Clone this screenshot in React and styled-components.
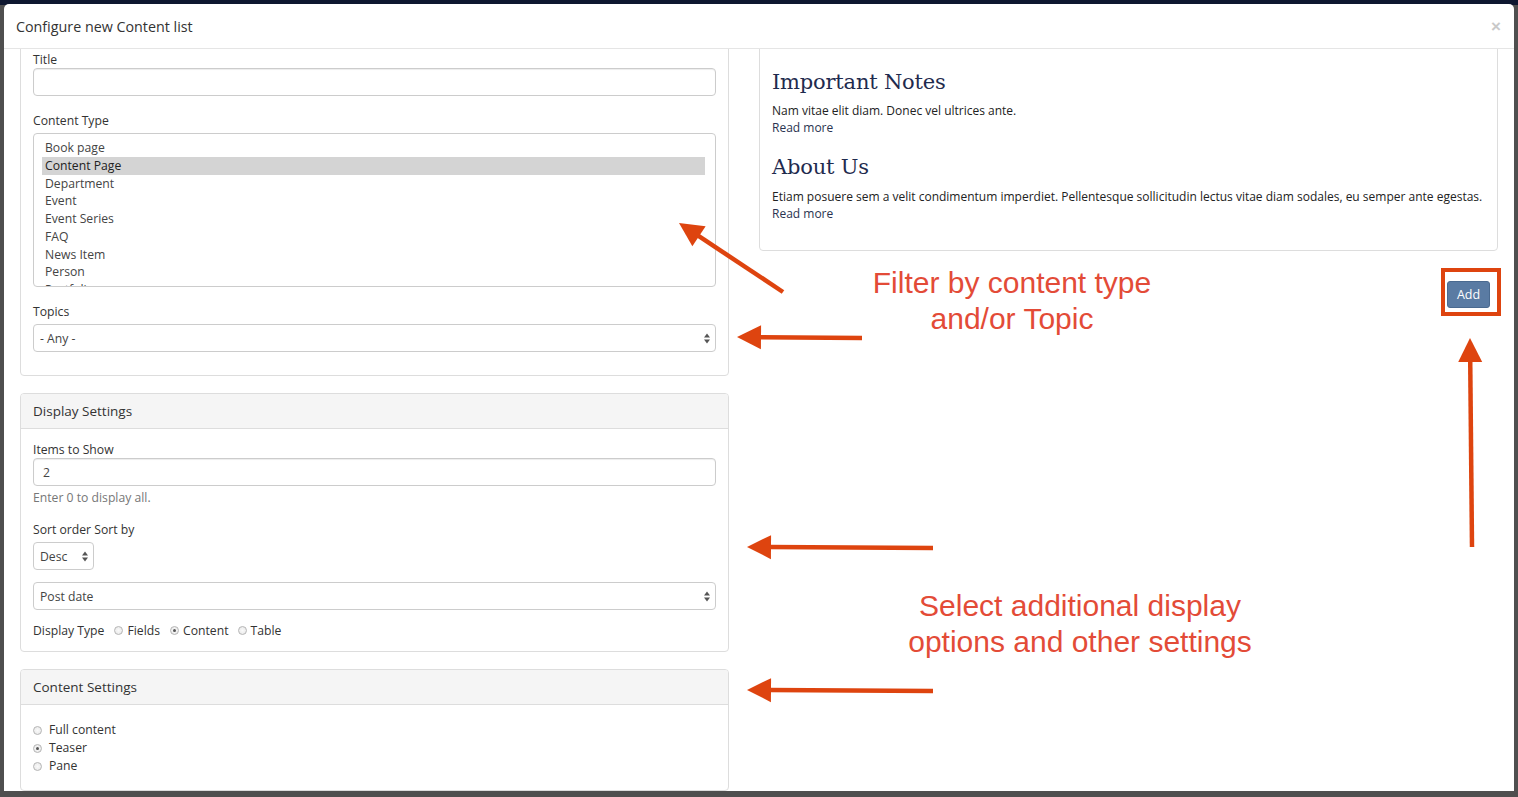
import styled, { createGlobalStyle } from "styled-components";

const GlobalStyle = createGlobalStyle`
  html, body {
    margin: 0;
    padding: 0;
  }
  body {
    font-family: "Open Sans", "Liberation Sans", sans-serif;
    color: #333;
  }
`;

const Backdrop = styled.div`
  position: relative;
  width: 1518px;
  height: 797px;
  box-sizing: border-box;
  padding: 4px 4px 6px 4px;
  background: linear-gradient(#0e1730 0 5px, #4f4f4f 5px);
  overflow: hidden;
`;

const Modal = styled.div`
  height: 100%;
  background: #fff;
  border-radius: 5px 5px 0 0;
  display: flex;
  flex-direction: column;
  overflow: hidden;
`;

const Header = styled.div`
  flex: none;
  height: 44px;
  border-bottom: 1px solid #e5e5e5;
  display: flex;
  align-items: center;
  justify-content: space-between;
  padding: 0 13px 0 12px;
`;

const Title = styled.h4`
  margin: 0;
  font-size: 14.3px;
  font-weight: 400;
  color: #333;
`;

const Close = styled.span`
  font-family: "Liberation Sans", sans-serif;
  font-size: 17px;
  font-weight: 700;
  color: #c9c9c9;
  line-height: 1;
`;

const Body = styled.div`
  flex: 1;
  display: flex;
  align-items: flex-start;
  gap: 30px;
  padding: 0 16px;
  overflow: hidden;
`;

const Column = styled.div`
  width: ${(p) => p.$width}px;
  flex: none;
  display: flex;
  flex-direction: column;
`;

const Panel = styled.div`
  border: 1px solid #ddd;
  border-radius: 4px;
  background: #fff;
  margin-top: ${(p) => p.$top || 0}px;
  padding: ${(p) => p.$pad || "0"};
`;

const PanelHeading = styled.div`
  height: 34px;
  display: flex;
  align-items: center;
  padding: 0 12px;
  background: #f5f5f5;
  border-bottom: 1px solid #ddd;
  border-radius: 3px 3px 0 0;
  font-size: 13.5px;
  color: #333;
`;

const PanelBody = styled.div`
  padding: ${(p) => p.$pad};
`;

const Group = styled.div`
  margin-bottom: ${(p) => p.$mb || 0}px;
`;

const Label = styled.label`
  display: block;
  font-size: 12.2px;
  line-height: 17px;
  color: #333;
  margin-bottom: ${(p) => p.$gap || 0}px;
`;

const TextInput = styled.div`
  box-sizing: border-box;
  height: 28px;
  border: 1px solid #ccc;
  border-radius: 4px;
  box-shadow: inset 0 1px 1px rgba(0, 0, 0, 0.075);
  padding: 0 9px;
  display: flex;
  align-items: center;
  font-size: 12.2px;
  color: #444;
`;

const ListBox = styled.div`
  box-sizing: border-box;
  height: 154px;
  border: 1px solid #ccc;
  border-radius: 4px;
  padding: 5px 10px 0 8px;
  overflow: hidden;
`;

const Option = styled.div`
  height: 17.75px;
  line-height: 17.75px;
  padding-left: 3px;
  font-size: 12.2px;
  color: ${(p) => (p.$selected ? "#222" : "#444")};
  background: ${(p) => (p.$selected ? "#d4d4d4" : "transparent")};
`;

const SelectBox = styled.div`
  box-sizing: border-box;
  width: ${(p) => (p.$width ? `${p.$width}px` : "100%")};
  height: 28px;
  border: 1px solid #ccc;
  border-radius: 4px;
  padding: 0 5px 0 6px;
  display: flex;
  align-items: center;
  justify-content: space-between;
  font-size: 12.2px;
  color: #444;
`;

const Help = styled.div`
  margin-top: 4px;
  font-size: 12.2px;
  line-height: 16px;
  color: #777;
`;

const InlineRow = styled.div`
  display: flex;
  align-items: center;
  font-size: 12.2px;
  line-height: 17px;
  color: #333;
`;

const RadioLabel = styled.span`
  display: inline-flex;
  align-items: center;
  gap: ${(p) => p.$gap || 5}px;
  margin-left: ${(p) => p.$ml || 0}px;
`;

const Radio = styled.span`
  box-sizing: border-box;
  width: 9px;
  height: 9px;
  border-radius: 50%;
  border: 1px solid #b5b5b5;
  background: radial-gradient(circle, #fafafa 0, #e6e6e6 100%);
  display: inline-flex;
  align-items: center;
  justify-content: center;
  &::after {
    content: "";
    width: 3px;
    height: 3px;
    border-radius: 50%;
    background: ${(p) => (p.$checked ? "#555" : "transparent")};
  }
`;

const RadioList = styled.div`
  display: flex;
  flex-direction: column;
  font-size: 12.2px;
  line-height: 18px;
  color: #333;
`;

const Heading = styled.h2`
  margin: ${(p) => p.$mt || 0}px 0 0;
  font-family: "DejaVu Serif", "Liberation Serif", serif;
  font-size: 21px;
  font-weight: 400;
  line-height: 28px;
  letter-spacing: -0.2px;
  color: #1f2b4e;
`;

const Para = styled.p`
  margin: ${(p) => p.$mt || 0}px 0 0;
  font-size: 12px;
  line-height: 17px;
  color: #222;
`;

const ReadMore = styled.span`
  display: block;
  color: #2a3350;
`;

const ActionRow = styled.div`
  display: flex;
  justify-content: flex-end;
  margin-top: 30px;
  padding-right: 8px;
`;

const AddButton = styled.button`
  width: 43px;
  height: 27px;
  border: 1px solid #4a6a90;
  border-radius: 3px;
  background: #5a7ba3;
  color: #fff;
  font-family: "Open Sans", "Liberation Sans", sans-serif;
  font-size: 12.5px;
  line-height: 25px;
  padding: 0;
`;

const Overlay = styled.svg`
  position: absolute;
  left: 0;
  top: 0;
  pointer-events: none;
`;

const Note = styled.div`
  position: absolute;
  left: ${(p) => p.$x}px;
  top: ${(p) => p.$y}px;
  transform: translateX(-50%);
  white-space: nowrap;
  text-align: center;
  font-family: "Liberation Sans", Arial, sans-serif;
  font-size: 30px;
  line-height: 36px;
  color: #e34b37;
`;

const ARROW = "#de440f";

function UpDown() {
  return (
    <svg width="6" height="11" viewBox="0 0 6 11">
      <path d="M0 4.5 L3 0.5 L6 4.5 Z M0 6.5 L3 10.5 L6 6.5 Z" fill="#555" />
    </svg>
  );
}

function Arrow({ from, to }) {
  const [x1, y1] = from;
  const [x2, y2] = to;
  const dx = x2 - x1;
  const dy = y2 - y1;
  const len = Math.hypot(dx, dy);
  const ux = dx / len;
  const uy = dy / len;
  const head = 24;
  const half = 12;
  const bx = x2 - ux * head;
  const by = y2 - uy * head;
  const px = -uy * half;
  const py = ux * half;
  return (
    <g>
      <line x1={x1} y1={y1} x2={bx + ux * 2} y2={by + uy * 2} stroke={ARROW} strokeWidth="4.5" />
      <polygon points={`${x2},${y2} ${bx + px},${by + py} ${bx - px},${by - py}`} fill={ARROW} />
    </g>
  );
}

const contentTypes = [
  "Book page",
  "Content Page",
  "Department",
  "Event",
  "Event Series",
  "FAQ",
  "News Item",
  "Person",
  "Portfolio",
];

export default function App() {
  return (
    <>
      <GlobalStyle />
      <Backdrop>
        <Modal>
          <Header>
            <Title>Configure new Content list</Title>
            <Close>×</Close>
          </Header>
          <Body>
            <Column $width={709}>
              <Panel $top={-19} $pad="20px 12px 23px">
                <Group $mb={16}>
                  <Label>Title</Label>
                  <TextInput />
                </Group>
                <Group $mb={16}>
                  <Label $gap={4}>Content Type</Label>
                  <ListBox>
                    {contentTypes.map((t) => (
                      <Option key={t} $selected={t === "Content Page"}>
                        {t}
                      </Option>
                    ))}
                  </ListBox>
                </Group>
                <Group>
                  <Label $gap={4}>Topics</Label>
                  <SelectBox>
                    <span>- Any -</span>
                    <UpDown />
                  </SelectBox>
                </Group>
              </Panel>

              <Panel $top={17}>
                <PanelHeading>Display Settings</PanelHeading>
                <PanelBody $pad="12px 12px 12px">
                  <Group $mb={15}>
                    <Label>Items to Show</Label>
                    <TextInput>2</TextInput>
                    <Help>Enter 0 to display all.</Help>
                  </Group>
                  <Group $mb={12}>
                    <Label $gap={4}>Sort order Sort by</Label>
                    <SelectBox $width={61}>
                      <span>Desc</span>
                      <UpDown />
                    </SelectBox>
                  </Group>
                  <Group $mb={12}>
                    <SelectBox>
                      <span>Post date</span>
                      <UpDown />
                    </SelectBox>
                  </Group>
                  <InlineRow>
                    Display Type
                    <RadioLabel $ml={10} $gap={4}>
                      <Radio /> Fields
                    </RadioLabel>
                    <RadioLabel $ml={10} $gap={4}>
                      <Radio $checked /> Content
                    </RadioLabel>
                    <RadioLabel $ml={9} $gap={4}>
                      <Radio /> Table
                    </RadioLabel>
                  </InlineRow>
                </PanelBody>
              </Panel>

              <Panel $top={17}>
                <PanelHeading>Content Settings</PanelHeading>
                <PanelBody $pad="16px 12px 15px">
                  <RadioList>
                    <RadioLabel $gap={7}>
                      <Radio /> Full content
                    </RadioLabel>
                    <RadioLabel $gap={7}>
                      <Radio $checked /> Teaser
                    </RadioLabel>
                    <RadioLabel $gap={7}>
                      <Radio /> Pane
                    </RadioLabel>
                  </RadioList>
                </PanelBody>
              </Panel>
            </Column>

            <Column $width={739}>
              <Panel $top={-19} $pad="37px 12px 28px">
                <Heading>Important Notes</Heading>
                <Para $mt={6}>
                  Nam vitae elit diam. Donec vel ultrices ante.
                  <ReadMore>Read more</ReadMore>
                </Para>
                <Heading $mt={17}>About Us</Heading>
                <Para $mt={7}>
                  Etiam posuere sem a velit condimentum imperdiet. Pellentesque sollicitudin lectus
                  vitae diam sodales, eu semper ante egestas.
                  <ReadMore>Read more</ReadMore>
                </Para>
              </Panel>
              <ActionRow>
                <AddButton>Add</AddButton>
              </ActionRow>
            </Column>
          </Body>
        </Modal>

        <Overlay width="1518" height="797" viewBox="0 0 1518 797">
          <Arrow from={[783, 292]} to={[679, 223]} />
          <Arrow from={[862, 338]} to={[737, 337]} />
          <Arrow from={[933, 548]} to={[747, 547]} />
          <Arrow from={[933, 691]} to={[747, 690]} />
          <Arrow from={[1472, 547]} to={[1470, 338]} />
          <rect x="1443" y="270" width="56" height="44" fill="none" stroke={ARROW} strokeWidth="4" />
        </Overlay>
        <Note $x={1012} $y={265}>
          Filter by content type
          <br />
          and/or Topic
        </Note>
        <Note $x={1080} $y={588}>
          Select additional display
          <br />
          options and other settings
        </Note>
      </Backdrop>
    </>
  );
}
